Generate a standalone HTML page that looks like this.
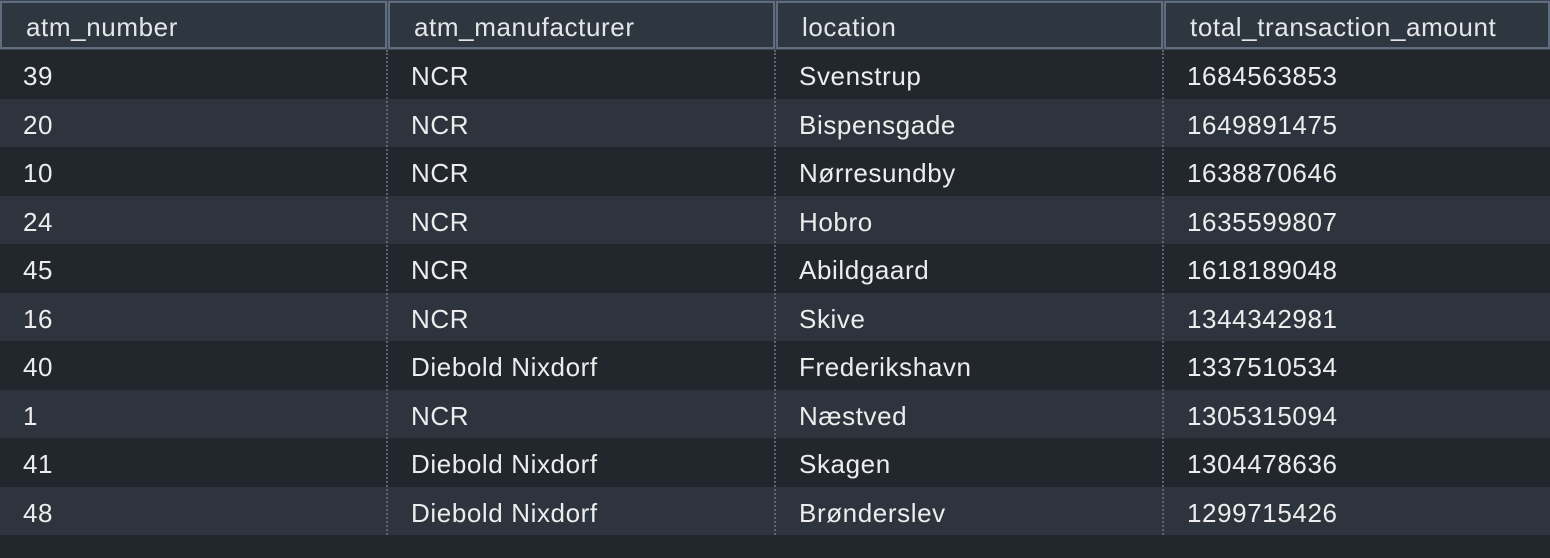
<!DOCTYPE html>
<html><head><meta charset="utf-8"><style>
*{margin:0;padding:0;box-sizing:border-box}
body{width:1550px;height:558px;background:#22272e;overflow:hidden;position:relative;font-family:"Liberation Sans",sans-serif;color:#ededed;font-size:26px;letter-spacing:0.6px}
.hbar{position:absolute;left:0;top:0;width:1550px;height:50px;background:#3d4754}
.hc{position:absolute;top:1px;height:48px;border:2px solid #5f6d7e;background:#2e3640;padding-left:24px;line-height:48px;color:#e4e6e8}
.row{position:absolute;left:0;width:1550px;height:48.5px}
.row.d{background:#22272e}.row.l{background:#2d343d}
.c{position:absolute;top:0;line-height:52px;}
.sep{position:absolute;top:50px;height:485px;width:0;border-left:2px dotted #5d6470}
</style></head><body>
<div class="hbar"></div>
<div class="hc" style="left:0;width:387px">atm_number</div>
<div class="hc" style="left:388px;width:387px">atm_manufacturer</div>
<div class="hc" style="left:776px;width:387px">location</div>
<div class="hc" style="left:1164px;width:386px">total_transaction_amount</div>

<div class="row d" style="top:50px"><div class="c" style="left:23px">39</div><div class="c" style="left:411px">NCR</div><div class="c" style="left:799px">Svenstrup</div><div class="c" style="left:1187px">1684563853</div></div>
<div class="row l" style="top:98.5px"><div class="c" style="left:23px">20</div><div class="c" style="left:411px">NCR</div><div class="c" style="left:799px">Bispensgade</div><div class="c" style="left:1187px">1649891475</div></div>
<div class="row d" style="top:147px"><div class="c" style="left:23px">10</div><div class="c" style="left:411px">NCR</div><div class="c" style="left:799px">Nørresundby</div><div class="c" style="left:1187px">1638870646</div></div>
<div class="row l" style="top:195.5px"><div class="c" style="left:23px">24</div><div class="c" style="left:411px">NCR</div><div class="c" style="left:799px">Hobro</div><div class="c" style="left:1187px">1635599807</div></div>
<div class="row d" style="top:244px"><div class="c" style="left:23px">45</div><div class="c" style="left:411px">NCR</div><div class="c" style="left:799px">Abildgaard</div><div class="c" style="left:1187px">1618189048</div></div>
<div class="row l" style="top:292.5px"><div class="c" style="left:23px">16</div><div class="c" style="left:411px">NCR</div><div class="c" style="left:799px">Skive</div><div class="c" style="left:1187px">1344342981</div></div>
<div class="row d" style="top:341px"><div class="c" style="left:23px">40</div><div class="c" style="left:411px">Diebold Nixdorf</div><div class="c" style="left:799px">Frederikshavn</div><div class="c" style="left:1187px">1337510534</div></div>
<div class="row l" style="top:389.5px"><div class="c" style="left:23px">1</div><div class="c" style="left:411px">NCR</div><div class="c" style="left:799px">Næstved</div><div class="c" style="left:1187px">1305315094</div></div>
<div class="row d" style="top:438px"><div class="c" style="left:23px">41</div><div class="c" style="left:411px">Diebold Nixdorf</div><div class="c" style="left:799px">Skagen</div><div class="c" style="left:1187px">1304478636</div></div>
<div class="row l" style="top:486.5px"><div class="c" style="left:23px">48</div><div class="c" style="left:411px">Diebold Nixdorf</div><div class="c" style="left:799px">Brønderslev</div><div class="c" style="left:1187px">1299715426</div></div>

<div class="sep" style="left:386px"></div>
<div class="sep" style="left:774px"></div>
<div class="sep" style="left:1162px"></div>
</body></html>
